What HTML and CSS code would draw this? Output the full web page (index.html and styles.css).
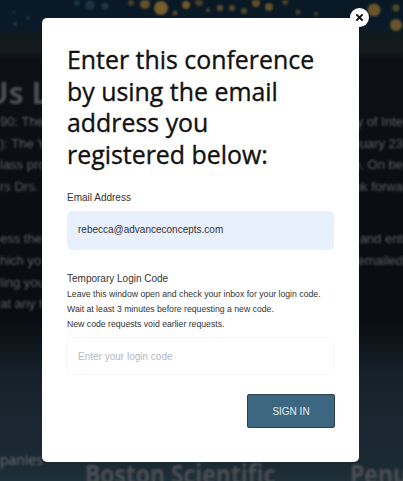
FILE: index.html
```html
<!DOCTYPE html>
<html lang="en">
<head>
<meta charset="utf-8">
<title>Sign in</title>
<link rel="stylesheet" href="styles.css">
</head>
<body>
<div class="backdrop">
  <svg class="banner" viewBox="0 0 403 60" width="403" height="60" aria-hidden="true">
    <g fill="#8a6a2c">
      <circle cx="161" cy="8" r="7" opacity=".85"/><circle cx="145" cy="4" r="5" opacity=".7"/>
      <circle cx="186" cy="5" r="4" opacity=".8"/><circle cx="175" cy="13" r="2.5" opacity=".6"/>
      <circle cx="199" cy="2" r="4" opacity=".5"/><circle cx="208" cy="10" r="2" opacity=".6"/>
      <circle cx="220" cy="8" r="3" opacity=".7"/><circle cx="232" cy="8" r="3" opacity=".6"/>
      <circle cx="244" cy="11" r="3" opacity=".6"/><circle cx="256" cy="3" r="4" opacity=".7"/>
      <circle cx="269" cy="7" r="4" opacity=".7"/><circle cx="285" cy="2" r="3" opacity=".5"/>
      <circle cx="298" cy="12" r="2.5" opacity=".5"/><circle cx="316" cy="14" r="2" opacity=".5"/>
      <circle cx="131" cy="3" r="3" opacity=".5"/>
      <circle cx="374" cy="10" r="6.5" opacity=".75"/><circle cx="396" cy="8" r="3.5" opacity=".6"/>
      <circle cx="396" cy="25" r="6" opacity=".75"/>
    </g>
    <g fill="#2a4456">
      <circle cx="90" cy="5" r="5" opacity=".6"/><circle cx="77" cy="3" r="3" opacity=".6"/>
      <circle cx="105" cy="6" r="3.5" opacity=".7"/><circle cx="15" cy="24" r="2" opacity=".7"/>
      <circle cx="28" cy="18" r="2" opacity=".6"/><circle cx="14" cy="12" r="1.5" opacity=".6"/>
    </g>
  </svg>
  <div class="heading-row"><span class="page-title">Us L</span></div>
  <div class="copy">
    <p class="copy-row"><span>90: The</span><span>y of Inte</span></p>
    <p class="copy-row"><span>): The Y</span><span>nuary 23</span></p>
    <p class="copy-row"><span>lass pro</span><span>e. On be</span></p>
    <p class="copy-row"><span>rs Drs.</span><span>ok forwa</span></p>
    <p class="copy-row copy-gap"><span>ess the</span><span>and ent</span></p>
    <p class="copy-row"><span>hich yo</span><span>emailed</span></p>
    <p class="copy-row"><span>ling you</span><span></span></p>
    <p class="copy-row"><span>at any t</span><span></span></p>
  </div>
  <div class="sponsors"><span class="sponsor-label">panies</span><span class="sponsor">Boston Scientific</span><span class="sponsor">Penu</span></div>
</div>

<main class="modal">
  <button class="close" type="button" aria-label="Close">
    <svg viewBox="0 0 10 10" width="9" height="9" aria-hidden="true"><path d="M1.5 1.5l7 7M8.5 1.5l-7 7"/></svg>
  </button>
  <h1 class="title">Enter this conference<br>by using the email<br>address you<br>registered below:</h1>
  <label class="label">Email Address</label>
  <div class="field field-filled">rebecca@advanceconcepts.com</div>
  <label class="label label-code">Temporary Login Code</label>
  <p class="hint">Leave this window open and check your inbox for your login code.</p>
  <p class="hint">Wait at least 3 minutes before requesting a new code.</p>
  <p class="hint">New code requests void earlier requests.</p>
  <div class="field field-empty">Enter your login code</div>
  <div class="actions"><button class="submit" type="button">SIGN IN</button></div>
</main>
</body>
</html>
```
FILE: styles.css
```css
* { box-sizing: border-box; }
html, body { margin: 0; height: 100%; }
body {
  width: 403px;
  height: 481px;
  overflow: hidden;
  position: relative;
  background: #0b0f14;
  font-family: "Liberation Sans", Arial, sans-serif;
}
.backdrop {
  height: 481px;
  display: flex;
  flex-direction: column;
  overflow: hidden;
  color: #4c5155;
  background: linear-gradient(180deg, #081825 0, #0a1a28 28px, #12191c 36px, #141a1b 50px, #0c0f13 60px, #090c11 320px, #16202a 372px, #1b2833 440px, #1a2a33 465px, #20303a 481px);
}
.banner { display: block; flex: none; filter: blur(1.2px); }
.heading-row { height: 26px; margin-top: 20px; filter: blur(1.2px); }
.page-title {
  display: block;
  margin-left: -14px;
  font-family: "Open Sans", sans-serif;
  font-weight: 700;
  font-size: 30px;
  line-height: 26px;
  color: #4a4e51;
}
.copy { margin-top: 5px; filter: blur(.9px); font-size: 13px; line-height: 21.6px; color: #5a6064; }
.copy-row { display: flex; justify-content: space-between; margin: 0; height: 21.6px; white-space: nowrap; }
.copy-gap { margin-top: 31px; }
.sponsors {
  margin-top: auto;
  height: 21px;
  display: flex;
  align-items: flex-start;
  font-family: "Open Sans", sans-serif;
  filter: blur(1px);
  white-space: nowrap;
}
.sponsor-label { font-size: 14px; line-height: 0; margin-top: 0; color: #6a7074; width: 85px; flex: none; }
.sponsor { font-size: 26px; line-height: 32px; margin-top: -2px; font-weight: 700; color: #4a4e52; margin-right: 49px; transform: scaleX(.88); transform-origin: left; }
.modal {
  position: absolute;
  left: 42px;
  top: 18px;
  width: 317px;
  height: 444px;
  padding: 26px 25px 0;
  background: #fff;
  border-radius: 5px;
  color: #2b2d30;
}
.close {
  position: absolute;
  top: -10px;
  right: -10px;
  width: 19px;
  height: 19px;
  padding: 0;
  border: 0;
  border-radius: 50%;
  background: #fff;
  display: flex;
  align-items: center;
  justify-content: center;
}
.close path { stroke: #111; stroke-width: 2.2; fill: none; }
.title {
  margin: 0;
  font-family: "Open Sans", sans-serif;
  font-weight: 400;
  font-size: 24.9px;
  line-height: 31.5px;
  color: #111;
  -webkit-text-stroke: .35px #111;
}
.label { display: block; font-size: 10px; line-height: 14px; color: #333; }
.title + .label { margin-top: 21px; }
.label-code { margin-top: 22px; margin-bottom: 1px; }
.field {
  height: 39px;
  margin-top: 6px;
  padding: 0 11px;
  border-radius: 5px;
  font-size: 10px;
  line-height: 38px;
}
.field-filled { background: #e8f0fe; color: #333; }
.field-empty { margin-top: 5px; height: 38px; border: 1px solid #f7f7f8; line-height: 38px; padding: 0 10px; color: #b4b8c2; }
.hint { margin: 0; font-size: 8.7px; line-height: 15px; color: #333; }
.actions { display: flex; justify-content: flex-end; margin-top: 19px; margin-right: -1px; }
.submit {
  width: 88px;
  height: 34px;
  padding: 0;
  border: 1px solid #2a4152;
  border-radius: 2px;
  background: #3d6780;
  color: #e4edf2;
  font-family: "Liberation Sans", Arial, sans-serif;
  font-size: 10px;
}
```
